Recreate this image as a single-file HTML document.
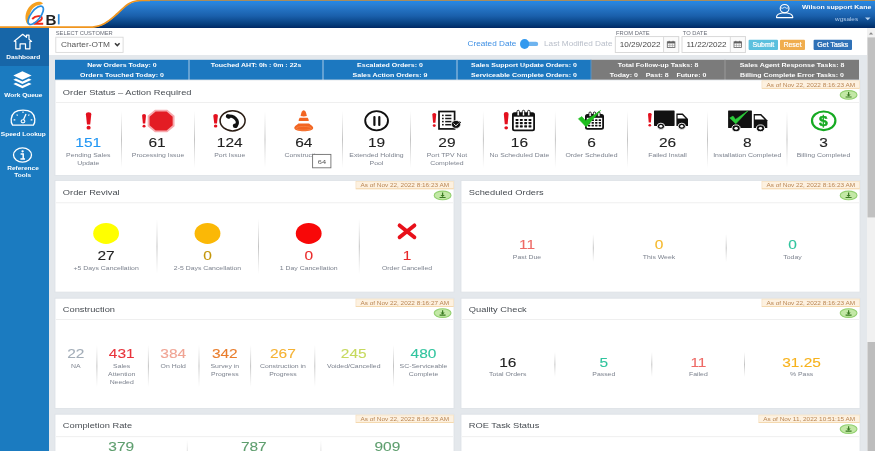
<!DOCTYPE html>
<html lang="en"><head><meta charset="utf-8"><title>Dashboard</title>
<style>
html,body{margin:0;padding:0;width:875px;height:451px;overflow:hidden;background:#e4e8ec;}
svg{display:block;font-family:"Liberation Sans", sans-serif;will-change:transform;}
text{font-family:"Liberation Sans", sans-serif;}
</style></head>
<body>
<svg width="875" height="451" viewBox="0 0 875 451">
<rect x="0" y="0" width="875" height="451" fill="#e4e8ec" />
<defs>
<linearGradient id="hg" x1="0" y1="0" x2="0" y2="1">
<stop offset="0" stop-color="#2088ea"/><stop offset="0.12" stop-color="#2b80d3"/><stop offset="0.55" stop-color="#1a60ac"/><stop offset="0.88" stop-color="#053c7a"/><stop offset="1" stop-color="#002864"/>
</linearGradient>
<linearGradient id="vd" x1="0" y1="0" x2="0" y2="1">
<stop offset="0" stop-color="#d0d0d0" stop-opacity="0"/><stop offset="0.5" stop-color="#c4c4c4"/><stop offset="1" stop-color="#d0d0d0" stop-opacity="0"/>
</linearGradient>
</defs>
<rect x="0" y="0" width="875" height="28" fill="#ffffff" />
<path d="M88 28 C104 28 111 19.5 117.5 14 C124 8.5 128 1 142 1 L875 1 L875 28 Z" fill="url(#hg)"/>
<path d="M138 0.5 L875 0.5" fill="none" stroke="#a88c5c" stroke-width="1.1"/>
<path d="M0 27.2 L88 27.2 C104 27.2 111 19 117.5 13.5 C124 8 128 0.5 142 0.5 L150 0.5" fill="none" stroke="#f0951e" stroke-width="1.7"/>
<path d="M28.3 24.8 C25 22.5 24.2 15 27.8 9 C30.3 5 34 2.2 38.5 1.8 C40.5 1.7 42.2 2.2 43 3.4 C41.5 4.6 39 4.6 36.3 5.8 C32 8 29.8 12.5 29.4 17.5 C29.2 20.5 29.1 23 28.3 24.8 Z" fill="#f5a020"/>
<path d="M32.2 19.0 C34 17.0 37.5 15.8 40 16.3 C42.6 16.9 42.4 19.2 40.2 20.6 L33.6 23.7 L43.2 23.7" fill="none" stroke="#f02818" stroke-width="1.9"/>
<ellipse cx="35.7" cy="15.3" rx="4.75" ry="11" transform="rotate(37.6 35.7 15.3)" fill="none" stroke="#2a8fe2" stroke-width="1.7"/>
<text transform="translate(45.5 24.5) scale(1.04 1)" font-size="14.6" fill="#222222" text-anchor="start" font-weight="bold" >B</text>
<rect x="57.9" y="14.2" width="1.7" height="10.2" fill="#2d8ad8" />
<ellipse cx="784.6" cy="8.6" rx="4.4" ry="4.1" fill="none" stroke="#ffffff" stroke-width="1.1"/>
<path d="M781.0 7.9 Q782.5 9.0 784.6 7.2 Q786.7 9.0 788.2 7.9" fill="none" stroke="#ffffff" stroke-width="0.8"/>
<path d="M776.5 17.6 C776.5 15.8 777.5 14.4 780.0 13.6 L782.0 12.9 L787.2 12.9 L789.2 13.6 C791.7 14.4 792.8 15.8 792.8 17.6 Z" fill="none" stroke="#ffffff" stroke-width="1.1" stroke-linejoin="round"/>
<text transform="translate(802 9.3) scale(1.130841121495327 1)" font-size="6.153" fill="#ffffff" text-anchor="start" font-weight="bold" >Wilson support Kane</text>
<text transform="translate(835 21.0) scale(1.21 1)" font-size="5.3" fill="#b0cbea" text-anchor="start" >wgsales</text>
<path d="M865 17.6 L870.5 17.6 L867.75 20.2 Z" fill="#b9d3ef"/>
<rect x="49" y="28" width="818" height="27" fill="#ffffff" />
<text transform="translate(55.7 35.0) scale(1.21 1)" font-size="4.8" fill="#6b6f7a" text-anchor="start" >SELECT CUSTOMER</text>
<rect x="55.8" y="37.2" width="67.3" height="15.2" fill="#ffffff" stroke="#d9d9d9" stroke-width="0.9"/>
<text transform="translate(60.9 47.2) scale(1.21 1)" font-size="6.9" fill="#555555" text-anchor="start" >Charter-OTM</text>
<path d="M115.0 43.2 L117.3 45.6 L119.6 43.2" fill="none" stroke="#3a3a3a" stroke-width="1.5"/>
<text transform="translate(467.5 46.2) scale(1.21 1)" font-size="6.8" fill="#3d8fe4" text-anchor="start" >Created Date</text>
<rect x="522" y="41.7" width="16.2" height="4.4" fill="#6fb4ef" rx="2.2"/>
<ellipse cx="524.6" cy="44.0" rx="4.6" ry="4.9" fill="#3399ee"/>
<text transform="translate(544 46.2) scale(1.21 1)" font-size="6.8" fill="#b8bec9" text-anchor="start" >Last Modified Date</text>
<text transform="translate(616.0 35.0) scale(1.21 1)" font-size="4.8" fill="#6b6f7a" text-anchor="start" >FROM DATE</text>
<rect x="615.3" y="36.6" width="63.4" height="15.9" fill="#ffffff" stroke="#d5d5d5" stroke-width="0.9"/>
<rect x="663.5999999999999" y="36.6" width="15.1" height="15.9" fill="#fbfbfb" stroke="#d8d8d8" stroke-width="0.9"/>
<text transform="translate(619.6999999999999 47.2) scale(1.21 1)" font-size="6.75" fill="#484848" text-anchor="start" >10/29/2022</text>
<rect x="667.3" y="41.8" width="7.6" height="5.6" fill="none" stroke="#606060" stroke-width="0.8"/>
<rect x="667.3" y="41.8" width="7.6" height="1.6" fill="#606060" />
<path d="M669.8 43.4 V47.4 M672.3999999999999 43.4 V47.4 M667.3 45.4 H674.8999999999999" stroke="#8a8a8a" stroke-width="0.5"/>
<rect x="668.6999999999999" y="40.8" width="0.9" height="1.6" fill="#606060" />
<rect x="672.5999999999999" y="40.8" width="0.9" height="1.6" fill="#606060" />
<text transform="translate(682.7 35.0) scale(1.21 1)" font-size="4.8" fill="#6b6f7a" text-anchor="start" >TO DATE</text>
<rect x="682.0" y="36.6" width="63.4" height="15.9" fill="#ffffff" stroke="#d5d5d5" stroke-width="0.9"/>
<rect x="730.3" y="36.6" width="15.1" height="15.9" fill="#fbfbfb" stroke="#d8d8d8" stroke-width="0.9"/>
<text transform="translate(686.4 47.2) scale(1.21 1)" font-size="6.75" fill="#484848" text-anchor="start" >11/22/2022</text>
<rect x="734.0" y="41.8" width="7.6" height="5.6" fill="none" stroke="#606060" stroke-width="0.8"/>
<rect x="734.0" y="41.8" width="7.6" height="1.6" fill="#606060" />
<path d="M736.5 43.4 V47.4 M739.0999999999999 43.4 V47.4 M734.0 45.4 H741.5999999999999" stroke="#8a8a8a" stroke-width="0.5"/>
<rect x="735.4" y="40.8" width="0.9" height="1.6" fill="#606060" />
<rect x="739.3" y="40.8" width="0.9" height="1.6" fill="#606060" />
<rect x="748.6" y="39.8" width="29.4" height="10.1" fill="#5bc0de" rx="1"/>
<text transform="translate(763.4 47.4) scale(1.11 1)" font-size="6.3" fill="#ffffff" text-anchor="middle" stroke="#ffffff" stroke-width="0.2">Submit</text>
<rect x="780.0" y="39.8" width="25.0" height="10.1" fill="#f0ad4e" rx="1"/>
<text transform="translate(792.5 47.4) scale(1.11 1)" font-size="6.3" fill="#ffffff" text-anchor="middle" stroke="#ffffff" stroke-width="0.2">Reset</text>
<rect x="813.6" y="39.8" width="38.4" height="10.1" fill="#2f71b7" rx="1"/>
<text transform="translate(832.8 47.4) scale(1.11 1)" font-size="6.3" fill="#ffffff" text-anchor="middle" stroke="#ffffff" stroke-width="0.2">Get Tasks</text>
<rect x="0" y="28" width="49" height="423" fill="#1b7bc0" />
<rect x="0" y="28" width="49" height="38" fill="#1766a8" />
<path d="M14.2 41.2 L22.7 34.3 L26.5 37.3 L26.5 35.2 L29.0 35.2 L29.0 39.3 L31.6 41.4 L29.9 41.4 L29.9 48.8 L25.5 48.8 L25.5 43.8 L20.1 43.8 L20.1 48.8 L15.8 48.8 L15.8 41.4 Z" fill="none" stroke="#ffffff" stroke-width="1.2" stroke-linejoin="round"/>
<text transform="translate(23.2 59.0) scale(1.130841121495327 1)" font-size="5.778" fill="#ffffff" text-anchor="middle" font-weight="bold" >Dashboard</text>
<path d="M13.3 75.5 L22.4 71.3 L31.6 75.5 L22.4 79.7 Z" fill="#ffffff"/>
<path d="M13.3 79.7 L15.9 78.5 L22.4 81.5 L28.9 78.5 L31.6 79.7 L22.4 84.0 Z" fill="#ffffff"/>
<path d="M13.3 84.0 L15.9 82.8 L22.4 85.8 L28.9 82.8 L31.6 84.0 L22.4 88.3 Z" fill="#ffffff"/>
<text transform="translate(23.3 97.3) scale(1.130841121495327 1)" font-size="5.778" fill="#ffffff" text-anchor="middle" font-weight="bold" >Work Queue</text>
<path d="M12.6 125.2 C11.4 123.5 11.0 121 11.2 119 C11.8 113 16.5 110.2 23.0 110.2 C29.5 110.2 34.2 113 34.8 119 C35.0 121 34.6 123.5 33.4 125.2 Z" fill="none" stroke="#ffffff" stroke-width="1.3" stroke-linejoin="round"/>
<path d="M13.6 119.9 H15.3 M16.6 114.6 L17.7 115.5 M23.0 111.6 V113.1 M29.4 114.6 L28.3 115.5 M32.4 119.9 H30.7" stroke="#ffffff" stroke-width="1.1"/>
<path d="M23.5 119.8 L26.0 114.0" stroke="#ffffff" stroke-width="1.3"/>
<ellipse cx="23.0" cy="121.3" rx="1.9" ry="1.6" fill="none" stroke="#ffffff" stroke-width="1.1"/>
<text transform="translate(23.3 136.0) scale(1.130841121495327 1)" font-size="5.778" fill="#ffffff" text-anchor="middle" font-weight="bold" >Speed Lookup</text>
<ellipse cx="22.5" cy="155.0" rx="9.0" ry="7.1" fill="none" stroke="#ffffff" stroke-width="1.3"/>
<ellipse cx="22.6" cy="151.3" rx="1.2" ry="1.1" fill="#ffffff"/>
<path d="M20.6 153.9 H23.2 V158.8 M20.4 159.0 H25.0" fill="none" stroke="#ffffff" stroke-width="1.5"/>
<text transform="translate(23.0 169.9) scale(1.130841121495327 1)" font-size="5.778" fill="#ffffff" text-anchor="middle" font-weight="bold" >Reference</text>
<text transform="translate(22.8 177.3) scale(1.130841121495327 1)" font-size="5.778" fill="#ffffff" text-anchor="middle" font-weight="bold" >Tools</text>
<rect x="867" y="28" width="8" height="423" fill="#f1f1f1" />
<rect x="867.5" y="37.4" width="7.5" height="180" fill="#c1c1c1" />
<rect x="867.5" y="342" width="7.5" height="109" fill="#bdbdbd" />
<path d="M868.8 34.6 L871 32.2 L873.2 34.6 Z" fill="#8a8a8a"/>
<rect x="55" y="59.8" width="134" height="20.2" fill="#1c78c0" />
<text transform="translate(122 66.9) scale(1.130841121495327 1)" font-size="6.206" fill="#ffffff" text-anchor="middle" font-weight="bold" >New Orders Today: 0</text>
<text transform="translate(122 77.0) scale(1.130841121495327 1)" font-size="6.206" fill="#ffffff" text-anchor="middle" font-weight="bold" >Orders Touched Today: 0</text>
<rect x="189" y="59.8" width="134" height="20.2" fill="#1c78c0" />
<rect x="188.5" y="59.8" width="1" height="20.2" fill="#a9c9e6" />
<text transform="translate(256 66.9) scale(1.130841121495327 1)" font-size="6.206" fill="#ffffff" text-anchor="middle" font-weight="bold" >Touched AHT: 0h : 0m : 22s</text>
<rect x="323" y="59.8" width="134" height="20.2" fill="#1c78c0" />
<rect x="322.5" y="59.8" width="1" height="20.2" fill="#a9c9e6" />
<text transform="translate(390 66.9) scale(1.130841121495327 1)" font-size="6.206" fill="#ffffff" text-anchor="middle" font-weight="bold" >Escalated Orders: 0</text>
<text transform="translate(390 77.0) scale(1.130841121495327 1)" font-size="6.206" fill="#ffffff" text-anchor="middle" font-weight="bold" >Sales Action Orders: 9</text>
<rect x="457" y="59.8" width="134" height="20.2" fill="#1c78c0" />
<rect x="456.5" y="59.8" width="1" height="20.2" fill="#a9c9e6" />
<text transform="translate(524 66.9) scale(1.130841121495327 1)" font-size="6.206" fill="#ffffff" text-anchor="middle" font-weight="bold" >Sales Support Update Orders: 0</text>
<text transform="translate(524 77.0) scale(1.130841121495327 1)" font-size="6.206" fill="#ffffff" text-anchor="middle" font-weight="bold" >Serviceable Complete Orders: 0</text>
<rect x="591" y="59.8" width="134" height="20.2" fill="#7b7b7b" />
<rect x="590.5" y="59.8" width="1" height="20.2" fill="#5a93c4" />
<text transform="translate(658 66.9) scale(1.130841121495327 1)" font-size="6.206" fill="#ffffff" text-anchor="middle" font-weight="bold" >Total Follow-up Tasks: 8</text>
<text transform="translate(658 77.0) scale(1.130841121495327 1)" font-size="6.206" fill="#ffffff" text-anchor="middle" font-weight="bold" >Today: 0 &#160;&#160; Past: 8 &#160;&#160; Future: 0</text>
<rect x="725" y="59.8" width="134" height="20.2" fill="#7b7b7b" />
<rect x="724.5" y="59.8" width="1" height="20.2" fill="#9a9a9a" />
<text transform="translate(792 66.9) scale(1.130841121495327 1)" font-size="6.206" fill="#ffffff" text-anchor="middle" font-weight="bold" >Sales Agent Response Tasks: 8</text>
<text transform="translate(792 77.0) scale(1.130841121495327 1)" font-size="6.206" fill="#ffffff" text-anchor="middle" font-weight="bold" >Billing Complete Error Tasks: 0</text>
<rect x="55" y="80" width="805" height="95.5" fill="#ffffff" stroke="#dde1e5" stroke-width="0.8"/>
<text transform="translate(62.8 94.7) scale(1.21 1)" font-size="7.7" fill="#474c52" text-anchor="start" >Order Status &#8211; Action Required</text>
<rect x="56" y="102.2" width="803" height="0.8" fill="#ebebeb" />
<rect x="761.929149734375" y="80.8" width="97.57085026562498" height="7.7" fill="#fdf1e0" stroke="#f4dcb8" stroke-width="0.6"/>
<rect x="761.929149734375" y="87.9" width="97.57085026562498" height="0.7" fill="#f3d3a4" />
<text transform="translate(810.7145748671875 86.6) scale(1.21 1)" font-size="5.3" fill="#b98552" text-anchor="middle" >As of Nov 22, 2022 8:16:23 AM</text>
<ellipse cx="848.6" cy="94.9" rx="8.4" ry="4.3" fill="#c3e8a6" stroke="#92d070" stroke-width="1.1"/>
<path d="M848.6 92.0 V95.0 M845.6 97.0 H851.6" fill="none" stroke="#3a7a22" stroke-width="1.2"/>
<path d="M846.5 94.4 L850.7 94.4 L848.6 96.5 Z" fill="#3a7a22"/>
<rect x="121.0" y="111" width="1" height="57" fill="url(#vd)" />
<rect x="194.0" y="111" width="1" height="57" fill="url(#vd)" />
<rect x="264.5" y="111" width="1" height="57" fill="url(#vd)" />
<rect x="342.0" y="111" width="1" height="57" fill="url(#vd)" />
<rect x="410.0" y="111" width="1" height="57" fill="url(#vd)" />
<rect x="482.9" y="111" width="1" height="57" fill="url(#vd)" />
<rect x="554.9" y="111" width="1" height="57" fill="url(#vd)" />
<rect x="627.0" y="111" width="1" height="57" fill="url(#vd)" />
<rect x="707.0" y="111" width="1" height="57" fill="url(#vd)" />
<rect x="786.5" y="111" width="1" height="57" fill="url(#vd)" />
<text transform="translate(88.25 147.1) scale(1.1913846153846153 1)" font-size="13.0" fill="#2196f3" text-anchor="middle" stroke="#2196f3" stroke-width="0.1">151</text>
<text transform="translate(88.25 157.4) scale(1.21 1)" font-size="5.7" fill="#7c828e" text-anchor="middle" >Pending Sales</text>
<text transform="translate(88.25 165.0) scale(1.21 1)" font-size="5.7" fill="#7c828e" text-anchor="middle" >Update</text>
<text transform="translate(157.1 147.1) scale(1.1913846153846153 1)" font-size="13.0" fill="#222222" text-anchor="middle" stroke="#222222" stroke-width="0.1">61</text>
<text transform="translate(158.0 157.4) scale(1.21 1)" font-size="5.7" fill="#7c828e" text-anchor="middle" >Processing Issue</text>
<text transform="translate(229.75 147.1) scale(1.1913846153846153 1)" font-size="13.0" fill="#222222" text-anchor="middle" stroke="#222222" stroke-width="0.1">124</text>
<text transform="translate(229.75 157.4) scale(1.21 1)" font-size="5.7" fill="#7c828e" text-anchor="middle" >Port Issue</text>
<text transform="translate(303.75 147.1) scale(1.1913846153846153 1)" font-size="13.0" fill="#222222" text-anchor="middle" stroke="#222222" stroke-width="0.1">64</text>
<text transform="translate(303.75 157.4) scale(1.21 1)" font-size="5.7" fill="#7c828e" text-anchor="middle" >Construction</text>
<text transform="translate(376.5 147.1) scale(1.1913846153846153 1)" font-size="13.0" fill="#222222" text-anchor="middle" stroke="#222222" stroke-width="0.1">19</text>
<text transform="translate(376.5 157.4) scale(1.21 1)" font-size="5.7" fill="#7c828e" text-anchor="middle" >Extended Holding</text>
<text transform="translate(376.5 165.0) scale(1.21 1)" font-size="5.7" fill="#7c828e" text-anchor="middle" >Pool</text>
<text transform="translate(446.95 147.1) scale(1.1913846153846153 1)" font-size="13.0" fill="#222222" text-anchor="middle" stroke="#222222" stroke-width="0.1">29</text>
<text transform="translate(446.95 157.4) scale(1.21 1)" font-size="5.7" fill="#7c828e" text-anchor="middle" >Port TPV Not</text>
<text transform="translate(446.95 165.0) scale(1.21 1)" font-size="5.7" fill="#7c828e" text-anchor="middle" >Completed</text>
<text transform="translate(519.4 147.1) scale(1.1913846153846153 1)" font-size="13.0" fill="#222222" text-anchor="middle" stroke="#222222" stroke-width="0.1">16</text>
<text transform="translate(519.4 157.4) scale(1.21 1)" font-size="5.7" fill="#7c828e" text-anchor="middle" >No Scheduled Date</text>
<text transform="translate(591.45 147.1) scale(1.1913846153846153 1)" font-size="13.0" fill="#222222" text-anchor="middle" stroke="#222222" stroke-width="0.1">6</text>
<text transform="translate(591.45 157.4) scale(1.21 1)" font-size="5.7" fill="#7c828e" text-anchor="middle" >Order Scheduled</text>
<text transform="translate(667.5 147.1) scale(1.1913846153846153 1)" font-size="13.0" fill="#222222" text-anchor="middle" stroke="#222222" stroke-width="0.1">26</text>
<text transform="translate(667.5 157.4) scale(1.21 1)" font-size="5.7" fill="#7c828e" text-anchor="middle" >Failed Install</text>
<text transform="translate(747.25 147.1) scale(1.1913846153846153 1)" font-size="13.0" fill="#222222" text-anchor="middle" stroke="#222222" stroke-width="0.1">8</text>
<text transform="translate(747.25 157.4) scale(1.21 1)" font-size="5.7" fill="#7c828e" text-anchor="middle" >Installation Completed</text>
<text transform="translate(823.5 147.1) scale(1.1913846153846153 1)" font-size="13.0" fill="#222222" text-anchor="middle" stroke="#222222" stroke-width="0.1">3</text>
<text transform="translate(823.5 157.4) scale(1.21 1)" font-size="5.7" fill="#7c828e" text-anchor="middle" >Billing Completed</text>
<path d="M85.9 114.36 Q85.9 112.2 88.6 112.2 Q91.3 112.2 91.3 114.36 L90.22 124.38 L86.97999999999999 124.38 Z" fill="#e3101e"/>
<ellipse cx="88.6" cy="127.65599999999999" rx="2.051999999999997" ry="1.8359999999999972" fill="#e3101e"/>
<path d="M142.1 115.46000000000001 Q142.1 113.9 144.05 113.9 Q146.0 113.9 146.0 115.46000000000001 L145.22000000000003 123.49 L142.88 123.49 Z" fill="#e3101e"/>
<ellipse cx="144.05" cy="126.196" rx="1.4820000000000022" ry="1.326000000000002" fill="#e3101e"/>
<path d="M155.3 110.6 L166.9 110.6 L173.6 116.2 L173.6 125.8 L166.9 131.4 L155.3 131.4 L148.6 125.8 L148.6 116.2 Z" fill="#e31c24" stroke="#f6aaae" stroke-width="1.9"/>
<path d="M213.3 115.74000000000001 Q213.3 113.9 215.60000000000002 113.9 Q217.9 113.9 217.9 115.74000000000001 L216.98000000000002 123.49 L214.22000000000003 123.49 Z" fill="#e3101e"/>
<ellipse cx="215.60000000000002" cy="125.944" rx="1.7479999999999978" ry="1.5639999999999983" fill="#e3101e"/>
<ellipse cx="232.6" cy="120.8" rx="12.5" ry="10.1" fill="none" stroke="#2b1d14" stroke-width="1.5"/>
<path d="M227.6 116.1 C231.5 115.6 235.3 117.4 237.0 120.6 C237.9 122.8 237.2 124.8 235.6 126.3" fill="none" stroke="#111111" stroke-width="3.1" stroke-linecap="round"/>
<ellipse cx="228.3" cy="116.5" rx="2.6" ry="2.1" transform="rotate(30 228.3 116.5)" fill="#111111"/>
<ellipse cx="235.3" cy="125.8" rx="2.5" ry="2.2" fill="#111111"/>
<path d="M300.6 116.0 C301.0 112.5 302.2 110.2 303.7 110.2 C305.2 110.2 306.4 112.5 306.8 116.0 C305.0 116.5 302.4 116.5 300.6 116.0 Z" fill="#f26522"/>
<path d="M299.7 117.8 L307.7 117.8 C308.3 118.8 308.9 120.0 308.7 121.0 L298.7 121.0 C298.5 120.0 299.1 118.8 299.7 117.8 Z" fill="#f26522"/>
<path d="M298.4 123.6 L309.1 123.6 C310.3 125.2 313.2 126.0 313.2 128.1 C313.2 130.4 308.5 131.3 303.8 131.3 C299.1 131.3 294.3 130.4 294.3 128.1 C294.3 126.0 297.2 125.2 298.4 123.6 Z" fill="#f26522"/>
<ellipse cx="303.8" cy="128.3" rx="7.6" ry="1.9" fill="none" stroke="#f6894e" stroke-width="0.7"/>
<ellipse cx="376.6" cy="120.75" rx="11.4" ry="9.6" fill="none" stroke="#111111" stroke-width="1.9"/>
<rect x="373.3" y="115.9" width="2.2" height="10.0" fill="#111111" rx="1"/>
<rect x="378.2" y="115.9" width="2.2" height="10.0" fill="#111111" rx="1"/>
<path d="M432.3 114.55999999999999 Q432.3 113.0 434.25 113.0 Q436.2 113.0 436.2 114.55999999999999 L435.42 122.8 L433.08 122.8 Z" fill="#e3101e"/>
<ellipse cx="434.25" cy="125.596" rx="1.4819999999999913" ry="1.3259999999999923" fill="#e3101e"/>
<rect x="439.0" y="111.5" width="15.6" height="17.4" fill="#ffffff" stroke="#111111" stroke-width="1.7"/>
<rect x="442.0" y="114.65" width="1.7" height="1.5" fill="#1a1a1a" />
<rect x="445.2" y="114.65" width="6.2" height="1.5" fill="#1a1a1a" />
<rect x="442.0" y="117.75" width="1.7" height="1.5" fill="#1a1a1a" />
<rect x="445.2" y="117.75" width="6.2" height="1.5" fill="#1a1a1a" />
<rect x="442.0" y="120.85" width="1.7" height="1.5" fill="#1a1a1a" />
<rect x="445.2" y="120.85" width="6.2" height="1.5" fill="#1a1a1a" />
<rect x="442.0" y="123.95" width="1.7" height="1.5" fill="#1a1a1a" />
<rect x="445.2" y="123.95" width="6.2" height="1.5" fill="#1a1a1a" />
<ellipse cx="456.0" cy="124.4" rx="4.6" ry="4.0" fill="#111111" stroke="#ffffff" stroke-width="0.7"/>
<path d="M453.6 123.6 L455.9 125.8 L458.4 123.6" fill="none" stroke="#ffffff" stroke-width="0.9"/>
<path d="M459.6 121.6 L461 122.8" stroke="#111" stroke-width="1"/>
<path d="M503.8 113.92 Q503.8 112.0 506.20000000000005 112.0 Q508.6 112.0 508.6 113.92 L507.64000000000004 124.32 L504.76000000000005 124.32 Z" fill="#e3101e"/>
<ellipse cx="506.20000000000005" cy="127.87199999999999" rx="1.8240000000000043" ry="1.632000000000004" fill="#e3101e"/>
<rect x="512.9" y="113.1" width="21.2" height="17.300000000000015" rx="1.6" fill="#ffffff" stroke="#111111" stroke-width="1.8"/>
<rect x="512.9" y="113.1" width="21.2" height="3.5700000000000025" fill="#111111" />
<rect x="517.01" y="110.3" width="2.4" height="5.670000000000004" rx="1.2" fill="#ffffff" stroke="#111111" stroke-width="0.9"/>
<rect x="522.3" y="110.3" width="2.4" height="5.670000000000004" rx="1.2" fill="#ffffff" stroke="#111111" stroke-width="0.9"/>
<rect x="527.5899999999999" y="110.3" width="2.4" height="5.670000000000004" rx="1.2" fill="#ffffff" stroke="#111111" stroke-width="0.9"/>
<rect x="515.57" y="118.91" width="2.88" height="2.10" rx="0.4" fill="#111111"/>
<rect x="519.89" y="118.91" width="2.88" height="2.10" rx="0.4" fill="#111111"/>
<rect x="524.21" y="118.91" width="2.88" height="2.10" rx="0.4" fill="#111111"/>
<rect x="528.54" y="118.91" width="2.88" height="2.10" rx="0.4" fill="#111111"/>
<rect x="515.57" y="122.10" width="2.88" height="2.10" rx="0.4" fill="#111111"/>
<rect x="519.89" y="122.10" width="2.88" height="2.10" rx="0.4" fill="#111111"/>
<rect x="524.21" y="122.10" width="2.88" height="2.10" rx="0.4" fill="#111111"/>
<rect x="528.54" y="122.10" width="2.88" height="2.10" rx="0.4" fill="#111111"/>
<rect x="515.57" y="125.29" width="2.88" height="2.10" rx="0.4" fill="#111111"/>
<rect x="519.89" y="125.29" width="2.88" height="2.10" rx="0.4" fill="#111111"/>
<rect x="524.21" y="125.29" width="2.88" height="2.10" rx="0.4" fill="#111111"/>
<rect x="528.54" y="125.29" width="2.88" height="2.10" rx="0.4" fill="#111111"/>
<rect x="585.9" y="114.8" width="17.2" height="13.99999999999999" rx="1.6" fill="#ffffff" stroke="#111111" stroke-width="1.8"/>
<rect x="585.9" y="114.8" width="17.2" height="3.008999999999998" fill="#111111" />
<rect x="588.93" y="112.0" width="2.4" height="4.778999999999997" rx="1.2" fill="#ffffff" stroke="#111111" stroke-width="0.9"/>
<rect x="593.3" y="112.0" width="2.4" height="4.778999999999997" rx="1.2" fill="#ffffff" stroke="#111111" stroke-width="0.9"/>
<rect x="597.67" y="112.0" width="2.4" height="4.778999999999997" rx="1.2" fill="#ffffff" stroke="#111111" stroke-width="0.9"/>
<rect x="587.95" y="119.26" width="2.38" height="1.77" rx="0.4" fill="#111111"/>
<rect x="591.52" y="119.26" width="2.38" height="1.77" rx="0.4" fill="#111111"/>
<rect x="595.09" y="119.26" width="2.38" height="1.77" rx="0.4" fill="#111111"/>
<rect x="598.66" y="119.26" width="2.38" height="1.77" rx="0.4" fill="#111111"/>
<rect x="587.95" y="121.95" width="2.38" height="1.77" rx="0.4" fill="#111111"/>
<rect x="591.52" y="121.95" width="2.38" height="1.77" rx="0.4" fill="#111111"/>
<rect x="595.09" y="121.95" width="2.38" height="1.77" rx="0.4" fill="#111111"/>
<rect x="598.66" y="121.95" width="2.38" height="1.77" rx="0.4" fill="#111111"/>
<rect x="587.95" y="124.64" width="2.38" height="1.77" rx="0.4" fill="#111111"/>
<rect x="591.52" y="124.64" width="2.38" height="1.77" rx="0.4" fill="#111111"/>
<rect x="595.09" y="124.64" width="2.38" height="1.77" rx="0.4" fill="#111111"/>
<rect x="598.66" y="124.64" width="2.38" height="1.77" rx="0.4" fill="#111111"/>
<path d="M578.4 118.8 L581.8 116.6 L585.6 120.8 L600.6 110.4 L586.2 126.9 Z" fill="#1fbf1f" stroke="#1fbf1f" stroke-width="0.6" stroke-linejoin="round"/>
<path d="M648.0 114.34000000000002 Q648.0 112.9 649.8 112.9 Q651.6 112.9 651.6 114.34000000000002 L650.88 122.49 L648.7199999999999 122.49 Z" fill="#e3101e"/>
<ellipse cx="649.8" cy="125.30399999999999" rx="1.3680000000000088" ry="1.2240000000000077" fill="#e3101e"/>
<rect x="654.0" y="110.5" width="20.600000000000023" height="15.400000000000006" fill="#111111" rx="0.6"/>
<path d="M676.4 125.9 V113.58 H682.78 L688.0 119.124 V125.9 Z" fill="#111111"/>
<path d="M677.6 114.98 H682.2 L685.68 118.508 H677.6 Z" fill="#ffffff"/>
<ellipse cx="660.9" cy="126.3" rx="3.7199999999999998" ry="3.1" fill="#111111" stroke="#ffffff" stroke-width="0.9"/>
<ellipse cx="660.9" cy="126.3" rx="1.55" ry="1.2400000000000002" fill="#ffffff"/>
<ellipse cx="681.8" cy="126.3" rx="3.7199999999999998" ry="3.1" fill="#111111" stroke="#ffffff" stroke-width="0.9"/>
<ellipse cx="681.8" cy="126.3" rx="1.55" ry="1.2400000000000002" fill="#ffffff"/>
<rect x="728.1" y="110.5" width="23.799999999999955" height="17.5" fill="#111111" rx="0.6"/>
<path d="M753.6999999999999 128.0 V114.0 H761.18 L767.3 120.3 V128.0 Z" fill="#111111"/>
<path d="M754.9 115.4 H760.5 L764.5799999999999 119.6 H754.9 Z" fill="#ffffff"/>
<ellipse cx="736.1" cy="128.3" rx="4.08" ry="3.4" fill="#111111" stroke="#ffffff" stroke-width="0.9"/>
<ellipse cx="736.1" cy="128.3" rx="1.7" ry="1.36" fill="#ffffff"/>
<ellipse cx="760.5" cy="128.3" rx="4.08" ry="3.4" fill="#111111" stroke="#ffffff" stroke-width="0.9"/>
<ellipse cx="760.5" cy="128.3" rx="1.7" ry="1.36" fill="#ffffff"/>
<path d="M729.8 118.0 L733.0 116.1 L735.5 119.4 L748.0 110.8 L735.8 123.8 Z" fill="#2ccc3a" stroke="#2ccc3a" stroke-width="0.6" stroke-linejoin="round"/>
<ellipse cx="823.7" cy="120.8" rx="11.7" ry="9.3" fill="none" stroke="#16aa22" stroke-width="2.2"/>
<text transform="translate(823.3 125.6) scale(1.0 1)" font-size="15.5" font-weight="bold" fill="#16aa22" stroke="#16aa22" stroke-width="0.5" text-anchor="middle">$</text>
<rect x="312.6" y="154.4" width="18.3" height="13.4" fill="#ffffff" stroke="#707070" stroke-width="0.9"/>
<text transform="translate(321.9 163.9) scale(1.21 1)" font-size="6.2" fill="#555555" text-anchor="middle" >64</text>
<rect x="55" y="180.5" width="399" height="111.6" fill="#ffffff" stroke="#dde1e5" stroke-width="0.8"/>
<text transform="translate(62.8 195.3) scale(1.21 1)" font-size="7.7" fill="#474c52" text-anchor="start" >Order Revival</text>
<rect x="56" y="202.4" width="397" height="0.8" fill="#ebebeb" />
<rect x="355.929149734375" y="181.3" width="97.57085026562498" height="7.7" fill="#fdf1e0" stroke="#f4dcb8" stroke-width="0.6"/>
<rect x="355.929149734375" y="188.4" width="97.57085026562498" height="0.7" fill="#f3d3a4" />
<text transform="translate(404.7145748671875 187.1) scale(1.21 1)" font-size="5.3" fill="#b98552" text-anchor="middle" >As of Nov 22, 2022 8:16:23 AM</text>
<ellipse cx="442.6" cy="195.4" rx="8.4" ry="4.3" fill="#c3e8a6" stroke="#92d070" stroke-width="1.1"/>
<path d="M442.6 192.5 V195.5 M439.6 197.5 H445.6" fill="none" stroke="#3a7a22" stroke-width="1.2"/>
<path d="M440.5 194.9 L444.7 194.9 L442.6 197.0 Z" fill="#3a7a22"/>
<rect x="156.5" y="219" width="1" height="55" fill="url(#vd)" />
<rect x="258.0" y="219" width="1" height="55" fill="url(#vd)" />
<rect x="358.8" y="219" width="1" height="55" fill="url(#vd)" />
<ellipse cx="106.1" cy="233.4" rx="12.9" ry="10.5" fill="#ffff00"/>
<text transform="translate(106.1 260.0) scale(1.1913846153846153 1)" font-size="13.0" fill="#222222" text-anchor="middle" stroke="#222222" stroke-width="0.1">27</text>
<text transform="translate(106.1 269.7) scale(1.21 1)" font-size="5.7" fill="#7c828e" text-anchor="middle" >+5 Days Cancellation</text>
<ellipse cx="207.5" cy="233.4" rx="12.9" ry="10.5" fill="#fbb806"/>
<text transform="translate(207.5 260.0) scale(1.1913846153846153 1)" font-size="13.0" fill="#c4960a" text-anchor="middle" stroke="#c4960a" stroke-width="0.1">0</text>
<text transform="translate(207.5 269.7) scale(1.21 1)" font-size="5.7" fill="#7c828e" text-anchor="middle" >2-5 Days Cancellation</text>
<ellipse cx="308.7" cy="233.4" rx="12.9" ry="10.5" fill="#f80808"/>
<text transform="translate(308.7 260.0) scale(1.1913846153846153 1)" font-size="13.0" fill="#ea2a2a" text-anchor="middle" stroke="#ea2a2a" stroke-width="0.1">0</text>
<text transform="translate(308.7 269.7) scale(1.21 1)" font-size="5.7" fill="#7c828e" text-anchor="middle" >1 Day Cancellation</text>
<path d="M399.6 225.4 L414.4 237.2 M414.4 225.4 L399.6 237.2" stroke="#e8101a" stroke-width="3.9" stroke-linecap="round"/>
<text transform="translate(407.0 260.0) scale(1.1913846153846153 1)" font-size="13.0" fill="#e8282a" text-anchor="middle" stroke="#e8282a" stroke-width="0.1">1</text>
<text transform="translate(407.0 269.7) scale(1.21 1)" font-size="5.7" fill="#7c828e" text-anchor="middle" >Order Cancelled</text>
<rect x="461" y="180.5" width="399" height="111.6" fill="#ffffff" stroke="#dde1e5" stroke-width="0.8"/>
<text transform="translate(468.8 195.3) scale(1.21 1)" font-size="7.7" fill="#474c52" text-anchor="start" >Scheduled Orders</text>
<rect x="462" y="202.4" width="397" height="0.8" fill="#ebebeb" />
<rect x="761.929149734375" y="181.3" width="97.57085026562498" height="7.7" fill="#fdf1e0" stroke="#f4dcb8" stroke-width="0.6"/>
<rect x="761.929149734375" y="188.4" width="97.57085026562498" height="0.7" fill="#f3d3a4" />
<text transform="translate(810.7145748671875 187.1) scale(1.21 1)" font-size="5.3" fill="#b98552" text-anchor="middle" >As of Nov 22, 2022 8:16:23 AM</text>
<ellipse cx="848.6" cy="195.4" rx="8.4" ry="4.3" fill="#c3e8a6" stroke="#92d070" stroke-width="1.1"/>
<path d="M848.6 192.5 V195.5 M845.6 197.5 H851.6" fill="none" stroke="#3a7a22" stroke-width="1.2"/>
<path d="M846.5 194.9 L850.7 194.9 L848.6 197.0 Z" fill="#3a7a22"/>
<rect x="592.8" y="234" width="1" height="28" fill="url(#vd)" />
<rect x="725.7" y="234" width="1" height="28" fill="url(#vd)" />
<text transform="translate(527 249.4) scale(1.1913846153846153 1)" font-size="13.0" fill="#ee6a66" text-anchor="middle" stroke="#ee6a66" stroke-width="0.1">11</text>
<text transform="translate(527 259.0) scale(1.21 1)" font-size="5.7" fill="#7c828e" text-anchor="middle" >Past Due</text>
<text transform="translate(659 249.4) scale(1.1913846153846153 1)" font-size="13.0" fill="#f5b82a" text-anchor="middle" stroke="#f5b82a" stroke-width="0.1">0</text>
<text transform="translate(659 259.0) scale(1.21 1)" font-size="5.7" fill="#7c828e" text-anchor="middle" >This Week</text>
<text transform="translate(792.5 249.4) scale(1.1913846153846153 1)" font-size="13.0" fill="#30c49e" text-anchor="middle" stroke="#30c49e" stroke-width="0.1">0</text>
<text transform="translate(792.5 259.0) scale(1.21 1)" font-size="5.7" fill="#7c828e" text-anchor="middle" >Today</text>
<rect x="55" y="298.2" width="399" height="110.2" fill="#ffffff" stroke="#dde1e5" stroke-width="0.8"/>
<text transform="translate(62.8 312.1) scale(1.21 1)" font-size="7.7" fill="#474c52" text-anchor="start" >Construction</text>
<rect x="56" y="319.0" width="397" height="0.8" fill="#ebebeb" />
<rect x="355.929149734375" y="299.0" width="97.57085026562498" height="7.7" fill="#fdf1e0" stroke="#f4dcb8" stroke-width="0.6"/>
<rect x="355.929149734375" y="306.09999999999997" width="97.57085026562498" height="0.7" fill="#f3d3a4" />
<text transform="translate(404.7145748671875 304.8) scale(1.21 1)" font-size="5.3" fill="#b98552" text-anchor="middle" >As of Nov 22, 2022 8:16:27 AM</text>
<ellipse cx="442.6" cy="313.09999999999997" rx="8.4" ry="4.3" fill="#c3e8a6" stroke="#92d070" stroke-width="1.1"/>
<path d="M442.6 310.2 V313.2 M439.6 315.2 H445.6" fill="none" stroke="#3a7a22" stroke-width="1.2"/>
<path d="M440.5 312.59999999999997 L444.7 312.59999999999997 L442.6 314.7 Z" fill="#3a7a22"/>
<rect x="96.4" y="345" width="1" height="42" fill="url(#vd)" />
<rect x="147.9" y="345" width="1" height="42" fill="url(#vd)" />
<rect x="198.5" y="345" width="1" height="42" fill="url(#vd)" />
<rect x="250.1" y="345" width="1" height="42" fill="url(#vd)" />
<rect x="314.3" y="345" width="1" height="42" fill="url(#vd)" />
<rect x="393.0" y="345" width="1" height="42" fill="url(#vd)" />
<text transform="translate(75.8 358.0) scale(1.1913846153846153 1)" font-size="13.0" fill="#a3adb8" text-anchor="middle" stroke="#a3adb8" stroke-width="0.1">22</text>
<text transform="translate(75.8 367.7) scale(1.21 1)" font-size="5.7" fill="#7c828e" text-anchor="middle" >NA</text>
<text transform="translate(121.7 358.0) scale(1.1913846153846153 1)" font-size="13.0" fill="#e8333b" text-anchor="middle" stroke="#e8333b" stroke-width="0.1">431</text>
<text transform="translate(121.7 367.7) scale(1.21 1)" font-size="5.7" fill="#7c828e" text-anchor="middle" >Sales</text>
<text transform="translate(121.7 375.8) scale(1.21 1)" font-size="5.7" fill="#7c828e" text-anchor="middle" >Attention</text>
<text transform="translate(121.7 383.9) scale(1.21 1)" font-size="5.7" fill="#7c828e" text-anchor="middle" >Needed</text>
<text transform="translate(173.2 358.0) scale(1.1913846153846153 1)" font-size="13.0" fill="#f0a393" text-anchor="middle" stroke="#f0a393" stroke-width="0.1">384</text>
<text transform="translate(173.2 367.7) scale(1.21 1)" font-size="5.7" fill="#7c828e" text-anchor="middle" >On Hold</text>
<text transform="translate(224.8 358.0) scale(1.1913846153846153 1)" font-size="13.0" fill="#e97d2c" text-anchor="middle" stroke="#e97d2c" stroke-width="0.1">342</text>
<text transform="translate(224.8 367.7) scale(1.21 1)" font-size="5.7" fill="#7c828e" text-anchor="middle" >Survey in</text>
<text transform="translate(224.8 375.8) scale(1.21 1)" font-size="5.7" fill="#7c828e" text-anchor="middle" >Progress</text>
<text transform="translate(282.9 358.0) scale(1.1913846153846153 1)" font-size="13.0" fill="#f5b234" text-anchor="middle" stroke="#f5b234" stroke-width="0.1">267</text>
<text transform="translate(282.9 367.7) scale(1.21 1)" font-size="5.7" fill="#7c828e" text-anchor="middle" >Construction in</text>
<text transform="translate(282.9 375.8) scale(1.21 1)" font-size="5.7" fill="#7c828e" text-anchor="middle" >Progress</text>
<text transform="translate(353.7 358.0) scale(1.1913846153846153 1)" font-size="13.0" fill="#c6d95e" text-anchor="middle" stroke="#c6d95e" stroke-width="0.1">245</text>
<text transform="translate(353.7 367.7) scale(1.21 1)" font-size="5.7" fill="#7c828e" text-anchor="middle" >Voided/Cancelled</text>
<text transform="translate(423.5 358.0) scale(1.1913846153846153 1)" font-size="13.0" fill="#30c49e" text-anchor="middle" stroke="#30c49e" stroke-width="0.1">480</text>
<text transform="translate(423.5 367.7) scale(1.21 1)" font-size="5.7" fill="#7c828e" text-anchor="middle" >SC-Serviceable</text>
<text transform="translate(423.5 375.8) scale(1.21 1)" font-size="5.7" fill="#7c828e" text-anchor="middle" >Complete</text>
<rect x="461" y="298.2" width="399" height="110.2" fill="#ffffff" stroke="#dde1e5" stroke-width="0.8"/>
<text transform="translate(468.8 312.1) scale(1.21 1)" font-size="7.7" fill="#474c52" text-anchor="start" >Quality Check</text>
<rect x="462" y="319.0" width="397" height="0.8" fill="#ebebeb" />
<rect x="761.929149734375" y="299.0" width="97.57085026562498" height="7.7" fill="#fdf1e0" stroke="#f4dcb8" stroke-width="0.6"/>
<rect x="761.929149734375" y="306.09999999999997" width="97.57085026562498" height="0.7" fill="#f3d3a4" />
<text transform="translate(810.7145748671875 304.8) scale(1.21 1)" font-size="5.3" fill="#b98552" text-anchor="middle" >As of Nov 22, 2022 8:16:23 AM</text>
<ellipse cx="848.6" cy="313.09999999999997" rx="8.4" ry="4.3" fill="#c3e8a6" stroke="#92d070" stroke-width="1.1"/>
<path d="M848.6 310.2 V313.2 M845.6 315.2 H851.6" fill="none" stroke="#3a7a22" stroke-width="1.2"/>
<path d="M846.5 312.59999999999997 L850.7 312.59999999999997 L848.6 314.7 Z" fill="#3a7a22"/>
<rect x="554.4" y="352" width="1" height="25" fill="url(#vd)" />
<rect x="651.3" y="352" width="1" height="25" fill="url(#vd)" />
<rect x="744.0" y="352" width="1" height="25" fill="url(#vd)" />
<text transform="translate(507.8 367.2) scale(1.1913846153846153 1)" font-size="13.0" fill="#222222" text-anchor="middle" stroke="#222222" stroke-width="0.1">16</text>
<text transform="translate(507.8 376.4) scale(1.21 1)" font-size="5.7" fill="#7c828e" text-anchor="middle" >Total Orders</text>
<text transform="translate(603.8 367.2) scale(1.1913846153846153 1)" font-size="13.0" fill="#30c49e" text-anchor="middle" stroke="#30c49e" stroke-width="0.1">5</text>
<text transform="translate(603.8 376.4) scale(1.21 1)" font-size="5.7" fill="#7c828e" text-anchor="middle" >Passed</text>
<text transform="translate(698.4 367.2) scale(1.1913846153846153 1)" font-size="13.0" fill="#ee6a66" text-anchor="middle" stroke="#ee6a66" stroke-width="0.1">11</text>
<text transform="translate(698.4 376.4) scale(1.21 1)" font-size="5.7" fill="#7c828e" text-anchor="middle" >Failed</text>
<text transform="translate(801.6 367.2) scale(1.1913846153846153 1)" font-size="13.0" fill="#f7b21c" text-anchor="middle" stroke="#f7b21c" stroke-width="0.1">31.25</text>
<text transform="translate(801.6 376.4) scale(1.21 1)" font-size="5.7" fill="#7c828e" text-anchor="middle" >% Pass</text>
<rect x="55" y="414.2" width="399" height="60" fill="#ffffff" stroke="#dde1e5" stroke-width="0.8"/>
<text transform="translate(62.8 427.6) scale(1.21 1)" font-size="7.7" fill="#474c52" text-anchor="start" >Completion Rate</text>
<rect x="56" y="436.3" width="397" height="0.8" fill="#ebebeb" />
<rect x="355.929149734375" y="415.0" width="97.57085026562498" height="7.7" fill="#fdf1e0" stroke="#f4dcb8" stroke-width="0.6"/>
<rect x="355.929149734375" y="422.09999999999997" width="97.57085026562498" height="0.7" fill="#f3d3a4" />
<text transform="translate(404.7145748671875 420.8) scale(1.21 1)" font-size="5.3" fill="#b98552" text-anchor="middle" >As of Nov 22, 2022 8:16:23 AM</text>
<rect x="186.8" y="440" width="1" height="40" fill="url(#vd)" />
<rect x="320.4" y="440" width="1" height="40" fill="url(#vd)" />
<text transform="translate(121.2 450.6) scale(1.1913846153846153 1)" font-size="13.0" fill="#5e9e6e" text-anchor="middle" stroke="#5e9e6e" stroke-width="0.1">379</text>
<text transform="translate(253.8 450.6) scale(1.1913846153846153 1)" font-size="13.0" fill="#5e9e6e" text-anchor="middle" stroke="#5e9e6e" stroke-width="0.1">787</text>
<text transform="translate(387.4 450.6) scale(1.1913846153846153 1)" font-size="13.0" fill="#5e9e6e" text-anchor="middle" stroke="#5e9e6e" stroke-width="0.1">909</text>
<rect x="461" y="414.2" width="399" height="60" fill="#ffffff" stroke="#dde1e5" stroke-width="0.8"/>
<text transform="translate(468.8 427.6) scale(1.21 1)" font-size="7.7" fill="#474c52" text-anchor="start" >ROE Task Status</text>
<rect x="462" y="436.3" width="397" height="0.8" fill="#ebebeb" />
<rect x="758.838484546875" y="415.0" width="100.66151545312499" height="7.7" fill="#fdf1e0" stroke="#f4dcb8" stroke-width="0.6"/>
<rect x="758.838484546875" y="422.09999999999997" width="100.66151545312499" height="0.7" fill="#f3d3a4" />
<text transform="translate(809.1692422734375 420.8) scale(1.21 1)" font-size="5.3" fill="#b98552" text-anchor="middle" >As of Nov 11, 2022 10:51:15 AM</text>
<ellipse cx="848.6" cy="429.09999999999997" rx="8.4" ry="4.3" fill="#c3e8a6" stroke="#92d070" stroke-width="1.1"/>
<path d="M848.6 426.2 V429.2 M845.6 431.2 H851.6" fill="none" stroke="#3a7a22" stroke-width="1.2"/>
<path d="M846.5 428.59999999999997 L850.7 428.59999999999997 L848.6 430.7 Z" fill="#3a7a22"/>
</svg>
</body></html>
